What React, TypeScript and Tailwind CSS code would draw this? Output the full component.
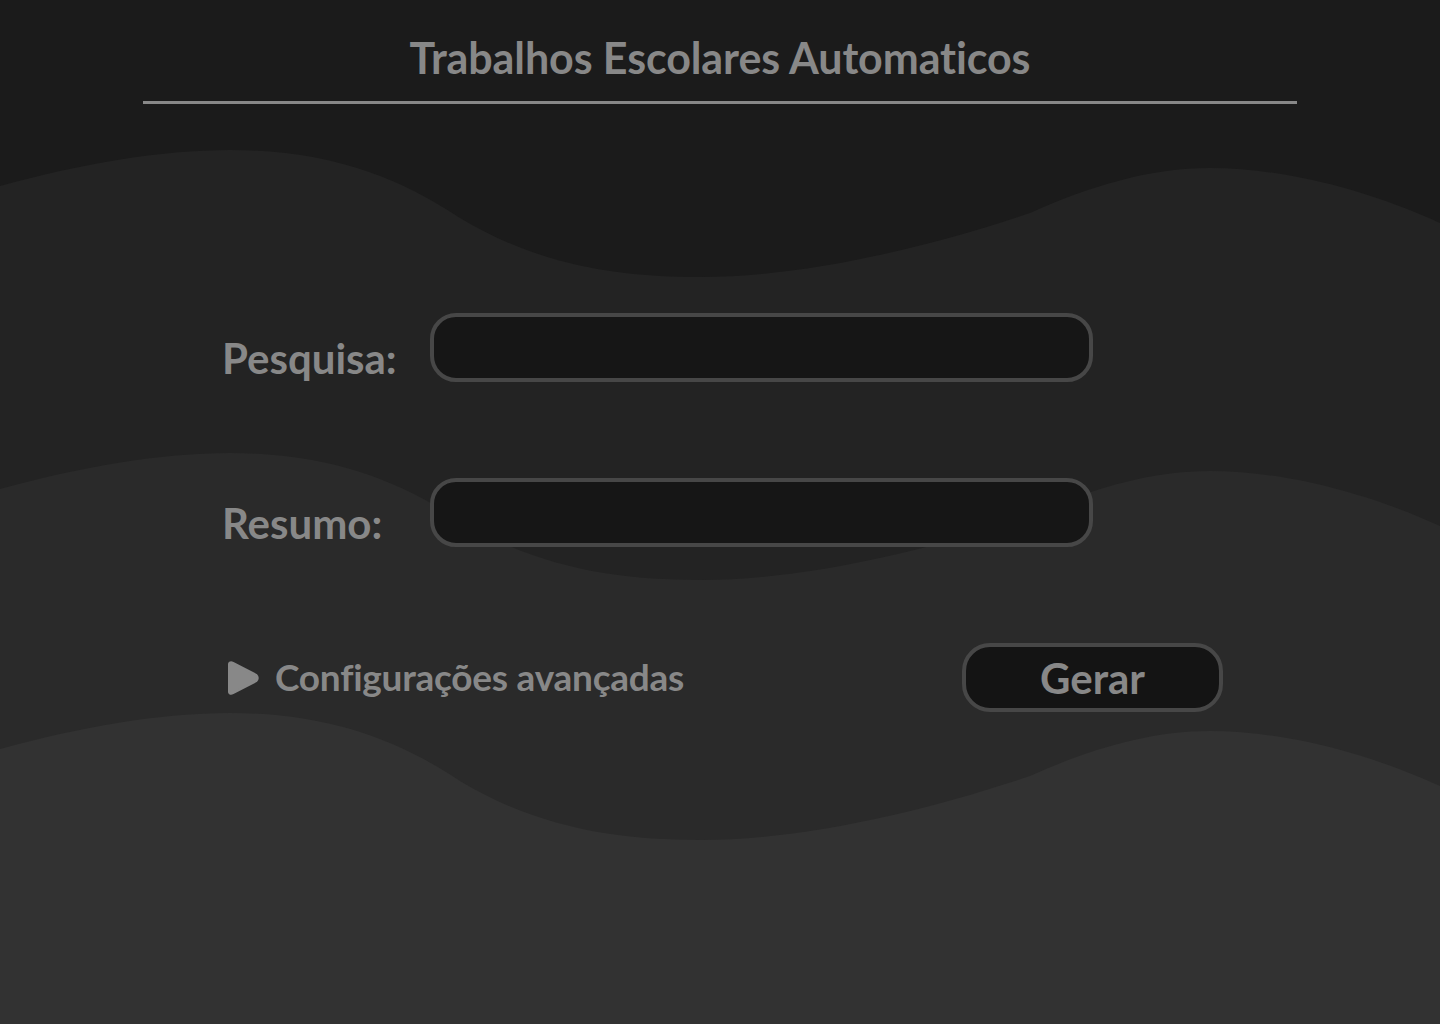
import React from "react";

const wave = (dy: number) =>
  `M0,${186 + dy} C80,${164 + dy} 160,${150 + dy} 230,${150 + dy} C330,${150 + dy} 400,${178 + dy} 460,${218 + dy} C540,${266 + dy} 620,${277 + dy} 700,${277 + dy} C800,${277 + dy} 920,${250 + dy} 1030,${213 + dy} C1090,${186 + dy} 1150,${168 + dy} 1210,${168 + dy} C1300,${168 + dy} 1390,${200 + dy} 1440,${223 + dy} L1440,1024 L0,1024 Z`;

function Background() {
  return (
    <svg
      className="absolute inset-0 h-full w-full"
      viewBox="0 0 1440 1024"
      preserveAspectRatio="none"
      aria-hidden="true"
    >
      <rect width="1440" height="1024" fill="#1b1b1b" />
      <path d={wave(0)} fill="#232323" />
      <path d={wave(303)} fill="#2a2a2a" />
      <path d={wave(563)} fill="#323232" />
    </svg>
  );
}

export default function App() {
  return (
    <div
      className="relative h-[1024px] w-[1440px] overflow-hidden text-[#888888]"
      style={{ fontFamily: "Lato, 'Open Sans', sans-serif" }}
    >
      <Background />
      <div className="relative flex flex-col items-center">
        <header className="flex w-[1154px] flex-col items-center pt-[28px]">
          <h1 className="text-[43px] font-bold leading-[60px] tracking-[-0.1px]">
            Trabalhos Escolares Automaticos
          </h1>
          <div className="mt-[13px] h-[3px] w-full bg-[#888888]" />
        </header>

        <main className="mt-[209px] flex w-[1000px] flex-col">
          <div className="flex items-center">
            <label className="w-[210px] pl-[2px] pt-[20px] text-[42px] font-bold leading-none">
              Pesquisa:
            </label>
            <input
              type="text"
              className="h-[69px] w-[663px] rounded-[26px] border-[4px] border-[#474747] bg-[#161616] px-5 text-[28px] text-[#bbbbbb] outline-none"
            />
          </div>
          <div className="mt-[96px] flex items-center">
            <label className="w-[210px] pl-[2px] pt-[20px] text-[42px] font-bold leading-none">
              Resumo:
            </label>
            <input
              type="text"
              className="h-[69px] w-[663px] rounded-[26px] border-[4px] border-[#474747] bg-[#161616] px-5 text-[28px] text-[#bbbbbb] outline-none"
            />
          </div>

          <div className="mt-[96px] flex items-center justify-between">
            <button className="ml-[8px] flex items-center gap-[15px] text-[37px] font-bold leading-none tracking-[-0.25px] text-[#888888]">
              <svg width="32" height="36" viewBox="0 0 32 36" aria-hidden="true">
                <path
                  d="M5,3 Q1,1 1,6 L1,30 Q1,35 5,33 L28,21 Q31,18 28,15 Z"
                  fill="#888888"
                  stroke="#888888"
                  strokeWidth="2.5"
                  strokeLinejoin="round"
                />
              </svg>
              <span className="pb-[2px]">Configurações avançadas</span>
            </button>
            <button className="mr-[-3px] flex h-[69px] w-[261px] items-center justify-center rounded-[28px] border-[4px] border-[#474747] bg-[#141414] text-[42px] font-bold leading-none text-[#888888]">
              Gerar
            </button>
          </div>
        </main>
      </div>
    </div>
  );
}
